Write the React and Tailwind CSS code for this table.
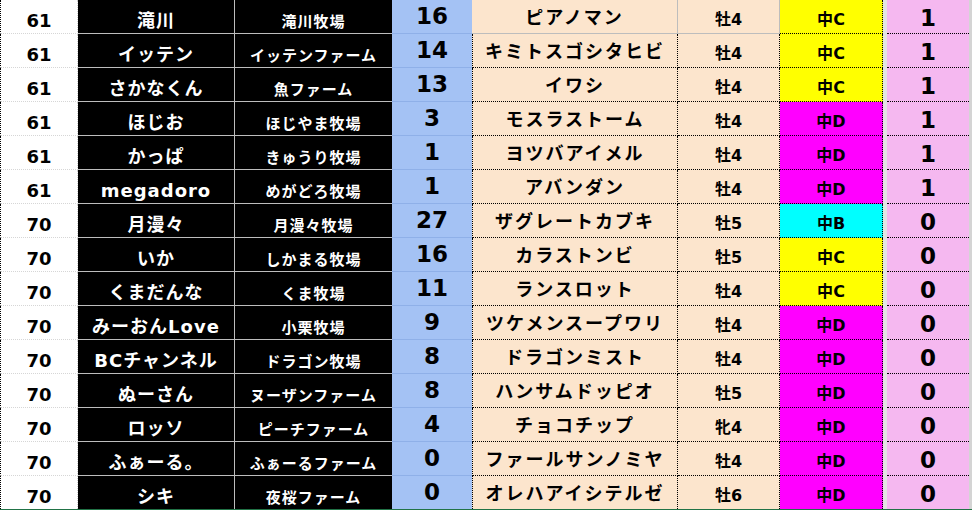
import React from "react";

const rows = [
  ["61", "滝川", "滝川牧場", "16", "ピアノマン", "牡4", "C", "1"],
  ["61", "イッテン", "イッテンファーム", "14", "キミトスゴシタヒビ", "牡4", "C", "1"],
  ["61", "さかなくん", "魚ファーム", "13", "イワシ", "牡4", "C", "1"],
  ["61", "ほじお", "ほじやま牧場", "3", "モスラストーム", "牡4", "D", "1"],
  ["61", "かっぱ", "きゅうり牧場", "1", "ヨツバアイメル", "牡4", "D", "1"],
  ["61", "megadoro", "めがどろ牧場", "1", "アバンダン", "牡4", "D", "1"],
  ["70", "月漫々", "月漫々牧場", "27", "ザグレートカブキ", "牡5", "B", "0"],
  ["70", "いか", "しかまる牧場", "16", "カラストンビ", "牡5", "C", "0"],
  ["70", "くまだんな", "くま牧場", "11", "ランスロット", "牡4", "C", "0"],
  ["70", "みーおんLove", "小栗牧場", "9", "ツケメンスープワリ", "牡4", "D", "0"],
  ["70", "BCチャンネル", "ドラゴン牧場", "8", "ドラゴンミスト", "牡4", "D", "0"],
  ["70", "ぬーさん", "ヌーザンファーム", "8", "ハンサムドッピオ", "牡5", "D", "0"],
  ["70", "ロッソ", "ピーチファーム", "4", "チョコチップ", "牝4", "D", "0"],
  ["70", "ふぁーる。", "ふぁーるファーム", "0", "ファールサンノミヤ", "牡4", "D", "0"],
  ["70", "シキ", "夜桜ファーム", "0", "オレハアイシテルゼ", "牡6", "D", "0"],
];

const classBg = {
  B: "bg-[#00ffff]",
  C: "bg-[#ffff00]",
  D: "bg-[#ff00ff]",
};

function Row({ r, i, last }) {
  const [rank, name, farm, num, horse, sex, cls, pt] = r;
  const first = i === 0;
  const bb = last ? "" : "border-b";
  const dot = first ? "border-[#bdbdbd] border-solid" : "border-black border-dotted";
  return (
    <div className={`flex ${last ? "h-[33px]" : "h-[34px]"}`}>
      <div className={`w-[78px] bg-white border-l border-l-black border-dotted flex items-center justify-center pt-[9px] text-[18px] text-black ${bb} border-b-[#d6d6d6] border-b-solid border-r border-r-[#cfcfcf] border-r-solid`}>
        {rank}
      </div>
      <div className={`w-[157px] bg-black text-white flex items-center justify-center pt-[9px] text-[18px] tracking-[1px] whitespace-nowrap border-r border-[#bdbdbd] ${bb}`}>
        {name}
      </div>
      <div className={`w-[157px] bg-black text-white flex items-center justify-center pt-[12px] text-[15px] tracking-[1px] whitespace-nowrap ${bb} border-[#bdbdbd]`}>
        {farm}
      </div>
      <div className={`w-[80px] bg-[#a4c2f4] flex items-center justify-center text-[23px] text-black ${bb} border-[#8fb0e8]`}>
        {num}
      </div>
      <div className={`w-[206px] bg-[#fce5cd] flex items-center justify-center pt-[3px] text-[18px] tracking-[2px] text-black whitespace-nowrap ${first ? "" : "border-l border-black border-dotted"} border-r ${bb} ${dot}`}>
        {horse}
      </div>
      <div className={`w-[102px] bg-[#fce5cd] flex items-center justify-center pt-[6px] text-[16px] text-black border-r ${bb} ${dot}`}>
        {sex}
      </div>
      <div className={`w-[103px] ${classBg[cls]} flex items-center justify-center pt-[7px] text-[16px] text-black border-r border-black border-dotted ${bb}`}>
        中{cls}
      </div>
      <div className="w-[4px] bg-[#e4e4e4]" />
      <div className={`w-[82px] bg-[#f5b8f0] flex items-center justify-center pt-[3px] text-[23px] text-black border-black border-dotted ${bb}`}>
        {pt}
      </div>
      <div className="w-[3px] bg-[#d4d4d4]" />
    </div>
  );
}

export default function App() {
  return (
    <div className="w-[972px] h-[510px] overflow-hidden bg-white font-bold font-['DejaVu_Sans','Noto_Sans_CJK_JP',sans-serif] leading-none">
      {rows.map((r, i) => (
        <Row key={i} r={r} i={i} last={i === rows.length - 1} />
      ))}
      <div className="h-[1px] bg-[#217346]" />
    </div>
  );
}
